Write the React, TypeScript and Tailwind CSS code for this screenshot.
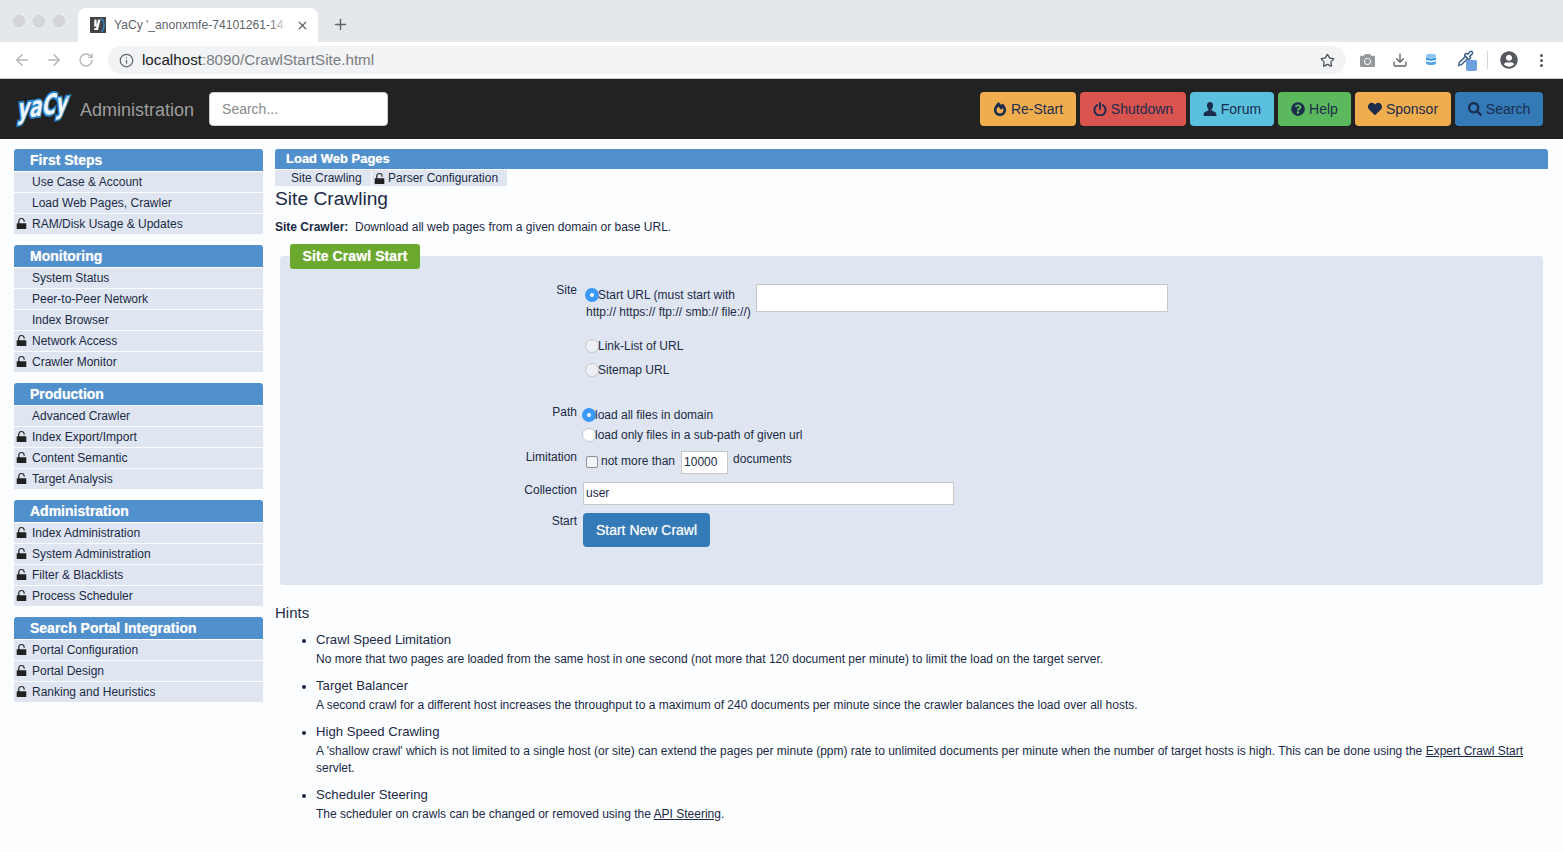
import React from "react";
import { ArrowLeft, ArrowRight, RotateCw, Info, Star, X, Plus, Pipette, Download } from "lucide-react";
import { FaFireAlt, FaQuestionCircle, FaHeart, FaSearch, FaUserCircle, FaCamera } from "react-icons/fa";

const Lock = () => (
  <svg viewBox="0 0 11 13" className="w-[11px] h-[13px] shrink-0" fill="#222">
    <path d="M2.200 7V4.200C2.200 2.100 3.600.9 5.500.9s3.300 1.200 3.300 3.300v.5H7.600v-.5c0-1.400-.9-2.200-2.100-2.200s-2.100.8-2.100 2.200V7z" />
    <rect x="0.700" y="6.200" width="9.600" height="5.800" rx="0.500" />
  </svg>
);

const PowerIcon = () => (
  <svg viewBox="0 0 14 14" className="w-[14px] h-[14px] shrink-0" fill="none" stroke="currentColor" strokeWidth="1.900" strokeLinecap="round">
    <path d="M4.200 3.100a5.600 5.600 0 1 0 5.600 0" />
    <path d="M7 1v6" />
  </svg>
);

const UserIcon = () => (
  <svg viewBox="0 0 14 14" className="w-[14px] h-[14px] shrink-0" fill="currentColor">
    <path d="M7 0C5 0 4 1.500 4 3.500c0 1.500.6 3 1.400 3.800v1.300C3.800 9.300.6 10 .6 12.500V14h12.800v-1.500c0-2.500-3.200-3.200-4.800-3.900V7.300C9.400 6.500 10 5 10 3.500 10 1.500 9 0 7 0z" />
  </svg>
);

const groups: { title: string; items: [string, boolean][] }[] = [
  { title: "First Steps", items: [["Use Case & Account", false], ["Load Web Pages, Crawler", false], ["RAM/Disk Usage & Updates", true]] },
  { title: "Monitoring", items: [["System Status", false], ["Peer-to-Peer Network", false], ["Index Browser", false], ["Network Access", true], ["Crawler Monitor", true]] },
  { title: "Production", items: [["Advanced Crawler", false], ["Index Export/Import", true], ["Content Semantic", true], ["Target Analysis", true]] },
  { title: "Administration", items: [["Index Administration", true], ["System Administration", true], ["Filter & Blacklists", true], ["Process Scheduler", true]] },
  { title: "Search Portal Integration", items: [["Portal Configuration", true], ["Portal Design", true], ["Ranking and Heuristics", true]] },
];

const Radio = ({ on = false, plain = false }: { on?: boolean; plain?: boolean }) =>
  on ? (
    <span className="w-[14px] h-[14px] mb-[2px] rounded-full bg-[#3b99fc] flex items-center justify-center shrink-0">
      <span className="w-[4px] h-[4px] rounded-full bg-white" />
    </span>
  ) : (
    <span className={`w-[14px] h-[14px] mb-[2px] rounded-full border border-[#c4c7cc] shrink-0 ${plain ? "bg-white" : "bg-[#eef0f6]"}`} />
  );

const Btn = ({ icon, label, bg, w }: { icon: React.ReactNode; label: string; bg: string; w: string }) => (
  <div className={`${bg} ${w} h-[34px] rounded-[4px] flex items-center justify-center gap-[4px] text-[14px] text-[#1b2c4d]`}>
    {icon}
    <span>{label}</span>
  </div>
);

const Label = ({ children, cls = "" }: { children: React.ReactNode; cls?: string }) => (
  <div className={`w-[297px] shrink-0 text-right ${cls}`}>{children}</div>
);

export default function App() {
  return (
    <div className="w-[1563px] h-[852px] overflow-hidden bg-[#fcfdff] text-[#1b2a45] text-[12px] leading-[17px] font-['Liberation_Sans',Arial,sans-serif]">
      {/* Tab strip */}
      <div className="h-[42px] bg-[#e4e7eb] flex items-end relative">
        <div className="flex gap-[8px] absolute left-[13px] top-[15px]">
          <span className="w-[12px] h-[12px] rounded-full bg-[#d4d6d9] border border-[#cdcfd2]" />
          <span className="w-[12px] h-[12px] rounded-full bg-[#d4d6d9] border border-[#cdcfd2]" />
          <span className="w-[12px] h-[12px] rounded-full bg-[#d4d6d9] border border-[#cdcfd2]" />
        </div>
        <div className="ml-[78px] w-[240px] h-[34px] bg-white rounded-t-[8px] flex items-center pl-[12px] pr-[9px] gap-[8px]">
          <svg viewBox="0 0 16 16" className="w-[16px] h-[16px] shrink-0">
            <rect width="16" height="16" fill="#444" />
            <path d="M11.500 1c3.500 4 3.500 10 0 14" stroke="#2b8fd8" strokeWidth="1.300" fill="none" />
            <path d="M4.500 2.500h2l.2 5.500 1.500-5.500h2.300L8 13H4l.5-2h1.700l.1-1.500H4z" fill="#fff" />
          </svg>
          <div className="relative flex-1 min-w-0 overflow-hidden">
            <div className="whitespace-nowrap text-[12.100px] text-[#5f6368]">YaCy '_anonxmfe-74101261-14</div>
            <span className="absolute right-0 top-0 bottom-0 w-[18px] bg-gradient-to-r from-white/0 to-white" />
          </div>
          <X size={13} strokeWidth={2.200} className="text-[#5f6368] shrink-0" />
        </div>
        <Plus size={17} strokeWidth={2} className="text-[#5f6368] ml-[14px] mb-[9px]" />
      </div>
      {/* Toolbar */}
      <div className="h-[37px] bg-white border-b border-[#c8c8c8] flex items-center pl-[13px] pr-[12px]">
        <ArrowLeft size={18} className="text-[#b4b6b9]" />
        <ArrowRight size={18} className="text-[#b4b6b9] ml-[14px]" />
        <RotateCw size={16} className="text-[#b4b6b9] ml-[15px]" />
        <div className="ml-[14px] w-[1238px] h-[28px] rounded-full bg-[#f1f3f4] flex items-center pl-[11px] pr-[11px]">
          <Info size={15} className="text-[#5f6368]" />
          <span className="ml-[8px] mb-[2px] text-[15.200px] text-[#7a7d82]"><span className="text-[#202124]">localhost</span>:8090/CrawlStartSite.html</span>
          <Star size={15} className="text-[#4c4f53] ml-auto" />
        </div>
        <FaCamera size={15} className="text-[#96999c] ml-[14px]" />
        <Download size={16} className="text-[#5f6368] ml-[17px]" />
        <svg viewBox="0 0 12 14" className="w-[12px] h-[14px] ml-[17px]">
          <ellipse cx="6" cy="3" rx="5" ry="2.200" fill="#8cc4f5" />
          <path d="M1 4.500c1.500 1.500 8.500 1.500 10 0v2c-1.500 1.500-8.500 1.500-10 0z" fill="#2a8be8" />
          <path d="M1 8c1.500 1.500 8.500 1.500 10 0v2.500c-1.500 2-8.500 2-10 0z" fill="#52a4ee" />
        </svg>
        <div className="relative ml-[20px] w-[20px] h-[20px]">
          <Pipette size={17} className="text-[#3a5f8c]" />
          <span className="absolute left-[9px] top-[10px] w-[11px] h-[11px] rounded-[2px] bg-[#6ea0df]" />
        </div>
        <span className="w-px h-[18px] bg-[#d5d7da] ml-[10px]" />
        <FaUserCircle size={18} className="text-[#55585c] ml-[12px]" />
        <div className="ml-[22px] flex flex-col gap-[2px]">
          <span className="w-[3px] h-[3px] rounded-full bg-[#55585c]" />
          <span className="w-[3px] h-[3px] rounded-full bg-[#55585c]" />
          <span className="w-[3px] h-[3px] rounded-full bg-[#55585c]" />
        </div>
      </div>
      {/* App header */}
      <div className="h-[60px] bg-[#222222] flex items-center pl-[15px] pr-[20px]">
        <svg viewBox="0 0 56 32" className="w-[56px] h-[32px] shrink-0 overflow-visible">
          <g transform="translate(2 26) skewY(-8) skewX(-10)">
            <text x="0" y="0" fontFamily="DejaVu Sans" fontWeight="700" fontSize="28" textLength="50" lengthAdjust="spacingAndGlyphs" fill="#eef6fc" stroke="#2b85c9" strokeWidth="3.800" paintOrder="stroke" strokeLinejoin="miter">yaCy</text>
          </g>
          <circle cx="53" cy="4" r="1.500" fill="#eef6fc" stroke="#2b85c9" strokeWidth="0.800" />
        </svg>
        <span className="ml-[9px] mt-[3px] text-[18px] text-[#9d9d9d]">Administration</span>
        <div className="ml-[15px] w-[179px] h-[34px] bg-white rounded-[4px] border border-[#ccc] flex items-center pl-[12px] text-[14px] text-[#8a8a8a]">Search...</div>
        <div className="ml-auto flex gap-[4px]">
          <Btn bg="bg-[#f0ad4e]" w="w-[96px]" label="Re-Start" icon={<FaFireAlt size={14} />} />
          <Btn bg="bg-[#d9534f]" w="w-[106px]" label="Shutdown" icon={<PowerIcon />} />
          <Btn bg="bg-[#5bc0de]" w="w-[84px]" label="Forum" icon={<UserIcon />} />
          <Btn bg="bg-[#5cb85c]" w="w-[73px]" label="Help" icon={<FaQuestionCircle size={14} />} />
          <Btn bg="bg-[#f0ad4e]" w="w-[96px]" label="Sponsor" icon={<FaHeart size={14} />} />
          <Btn bg="bg-[#337ab7]" w="w-[88px]" label="Search" icon={<FaSearch size={14} />} />
        </div>
      </div>
      {/* Body */}
      <div className="flex pt-[10px] pl-[14px]">
        <aside className="w-[249px] shrink-0 flex flex-col gap-[11px]">
          {groups.map((g) => (
            <div key={g.title}>
              <div className="h-[22px] rounded-t-[3px] bg-[#5090cd] pl-[16px] text-[14px] leading-[22px] font-bold text-white [text-shadow:0_0_1px_rgba(255,255,255,0.6)]">{g.title}</div>
              {g.items.map(([t, locked]) => (
                <div key={t} className="h-[20px] mt-px bg-[#dfe6f2] flex items-center relative pl-[18px]">
                  {locked && <span className="absolute left-[2px] top-[3px]"><Lock /></span>}
                  <span>{t}</span>
                </div>
              ))}
            </div>
          ))}
        </aside>
        <main className="ml-[12px] w-[1273px]">
          <div className="h-[20px] rounded-t-[3px] bg-[#5090cd] pl-[11px] text-[13px] leading-[19px] font-bold text-white [text-shadow:0_0_1px_rgba(255,255,255,0.6)]">Load Web Pages</div>
          <div className="flex mt-px h-[16px] gap-px leading-[16px]">
            <div className="w-[96px] bg-[#dfe6f2] pl-[16px]">Site Crawling</div>
            <div className="w-[135px] bg-[#dfe6f2] flex items-center gap-[3px] pl-[2px]"><Lock /><span>Parser Configuration</span></div>
          </div>
          <h1 className="text-[19.200px] leading-[26px]">Site Crawling</h1>
          <p className="mt-[7px] leading-[16px]"><b>Site Crawler:</b>&nbsp; Download all web pages from a given domain or base URL.</p>
          {/* Fieldset */}
          <div className="relative mt-[9px] ml-[15px] w-[130px] h-[25px] bg-[#6aa92e] rounded-[3px] text-[14px] leading-[24px] font-bold text-white text-center z-10 tracking-[0.1px] [text-shadow:0_0_1px_rgba(255,255,255,0.6)]">Site Crawl Start</div>
          <div className="-mt-[13px] ml-[5px] w-[1263px] h-[329px] bg-[#dfe6f2] rounded-[3px] pt-[28px]">
            <div className="flex">
              <Label cls="-mt-[2px]">Site</Label>
              <div className="ml-[8px] w-[171px] pt-[3px]">
                <div className="flex items-center"><Radio on /><span className="-ml-px">Start URL (must start with</span></div>
                <div className="ml-px">http:// https:// ftp:// smb:// file://)</div>
              </div>
              <div className="w-[412px] h-[28px] bg-white border border-[#c8c8c8]" />
            </div>
            <div className="flex items-center ml-[305px] mt-[17px]"><Radio /><span className="-ml-px">Link-List of URL</span></div>
            <div className="flex items-center ml-[305px] mt-[7px]"><Radio /><span className="-ml-px">Sitemap URL</span></div>
            <div className="flex mt-[28px]">
              <Label cls="-mt-[3px]">Path</Label>
              <div className="ml-[5px] flex items-center"><Radio on /><span className="-ml-px">load all files in domain</span></div>
            </div>
            <div className="flex items-center ml-[302px] mt-[3px]"><Radio plain /><span className="-ml-px">load only files in a sub-path of given url</span></div>
            <div className="flex mt-[7px] h-[23px]">
              <Label cls="-mt-[2px]">Limitation</Label>
              <div className="ml-[9px] flex items-center">
                <span className="w-[12px] h-[12px] rounded-[2px] border border-[#8f9196] bg-[#f4f5f8] -mt-[2px]" />
                <span className="ml-[3px] -mt-[2px]">not more than</span>
                <span className="ml-[6px] w-[47px] h-[23px] bg-white border border-[#c8c8c8] pl-[2px] leading-[21px]">10000</span>
                <span className="ml-[5px] -mt-[7px]">documents</span>
              </div>
            </div>
            <div className="flex mt-[8px]">
              <Label>Collection</Label>
              <div className="ml-[6px] w-[371px] h-[23px] bg-white border border-[#c8c8c8] pl-[2px] leading-[21px]">user</div>
            </div>
            <div className="flex mt-[8px]">
              <Label>Start</Label>
              <div className="ml-[6px] w-[127px] h-[34px] bg-[#337ab7] rounded-[4px] text-[14px] leading-[34px] text-white text-center [text-shadow:0_0_1px_rgba(255,255,255,0.6)]">Start New Crawl</div>
            </div>
          </div>
          {/* Hints */}
          <h2 className="text-[15px] leading-[18px] mt-[19px]">Hints</h2>
          <ul className="ml-[25px] mt-[9px] list-disc pl-[16px] w-[1232px]">
            <li className="mb-[9px]">
              <div className="text-[13.150px] leading-[18px]">Crawl Speed Limitation</div>
              <div className="mt-[2px]">No more that two pages are loaded from the same host in one second (not more that 120 document per minute) to limit the load on the target server.</div>
            </li>
            <li className="mb-[9px]">
              <div className="text-[13.150px] leading-[18px]">Target Balancer</div>
              <div className="mt-[2px]">A second crawl for a different host increases the throughput to a maximum of 240 documents per minute since the crawler balances the load over all hosts.</div>
            </li>
            <li className="mb-[9px]">
              <div className="text-[13.150px] leading-[18px]">High Speed Crawling</div>
              <div className="mt-[2px]">A 'shallow crawl' which is not limited to a single host (or site) can extend the pages per minute (ppm) rate to unlimited documents per minute when the number of target hosts is high. This can be done using the <u>Expert Crawl Start</u> servlet.</div>
            </li>
            <li>
              <div className="text-[13.150px] leading-[18px]">Scheduler Steering</div>
              <div className="mt-[2px]">The scheduler on crawls can be changed or removed using the <u>API Steering</u>.</div>
            </li>
          </ul>
        </main>
      </div>
    </div>
  );
}
